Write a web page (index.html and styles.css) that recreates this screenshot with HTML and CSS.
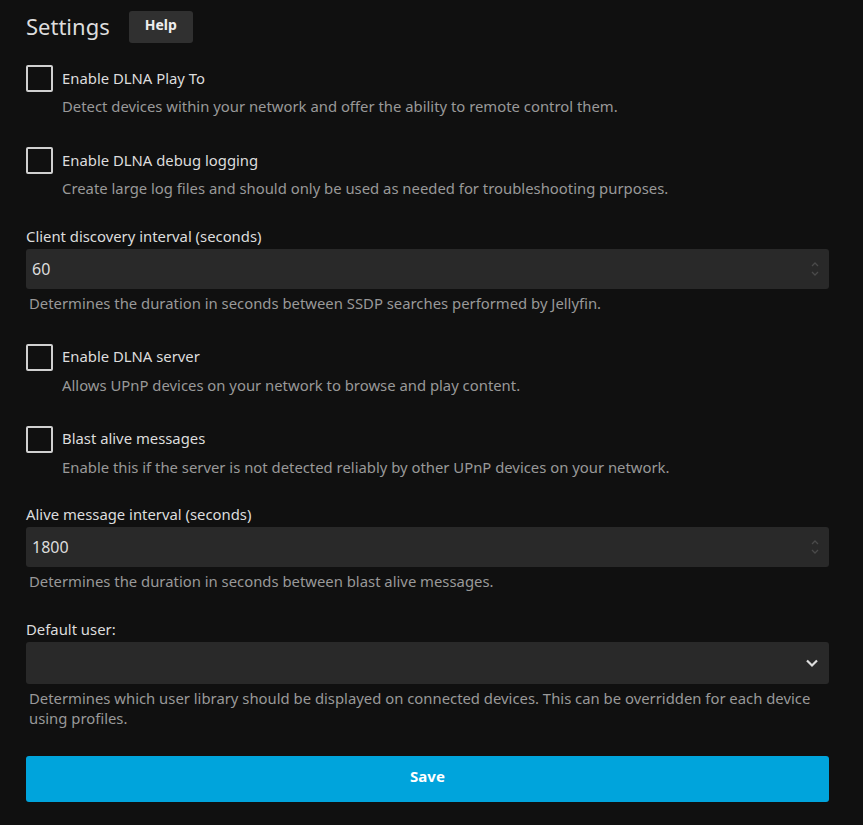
FILE: index.html
```html
<!DOCTYPE html>
<html>
<head>
<meta charset="utf-8">
<link rel="stylesheet" href="styles.css">
</head>
<body>
<div class="page">
  <div class="header">
    <h2 class="title">Settings</h2>
    <button class="help">Help</button>
  </div>

  <div class="check-block first">
    <label class="check-row"><span class="box"></span><span class="check-label">Enable DLNA Play To</span></label>
    <div class="check-desc">Detect devices within your network and offer the ability to remote control them.</div>
  </div>

  <div class="check-block">
    <label class="check-row"><span class="box"></span><span class="check-label">Enable DLNA debug logging</span></label>
    <div class="check-desc">Create large log files and should only be used as needed for troubleshooting purposes.</div>
  </div>

  <div class="field">
    <div class="field-label">Client discovery interval (seconds)</div>
    <div class="input">
      <span class="value">60</span>
      <svg class="spin" width="8" height="16" viewBox="0 0 8 16"><path d="M1 5 L4 2 L7 5 M1 11 L4 14 L7 11" fill="none" stroke="#4a4a4a" stroke-width="1.3"/></svg>
    </div>
    <div class="field-desc">Determines the duration in seconds between SSDP searches performed by Jellyfin.</div>
  </div>

  <div class="check-block">
    <label class="check-row"><span class="box"></span><span class="check-label">Enable DLNA server</span></label>
    <div class="check-desc">Allows UPnP devices on your network to browse and play content.</div>
  </div>

  <div class="check-block">
    <label class="check-row"><span class="box"></span><span class="check-label">Blast alive messages</span></label>
    <div class="check-desc">Enable this if the server is not detected reliably by other UPnP devices on your network.</div>
  </div>

  <div class="field">
    <div class="field-label">Alive message interval (seconds)</div>
    <div class="input">
      <span class="value">1800</span>
      <svg class="spin" width="8" height="16" viewBox="0 0 8 16"><path d="M1 5 L4 2 L7 5 M1 11 L4 14 L7 11" fill="none" stroke="#4a4a4a" stroke-width="1.3"/></svg>
    </div>
    <div class="field-desc">Determines the duration in seconds between blast alive messages.</div>
  </div>

  <div class="field">
    <div class="field-label">Default user:</div>
    <div class="input select">
      <span class="value"></span>
      <svg class="chev" width="14" height="10" viewBox="0 0 14 10"><path d="M2 2.5 L7 7.5 L12 2.5" fill="none" stroke="#dddddd" stroke-width="2.2"/></svg>
    </div>
    <div class="field-desc">Determines which user library should be displayed on connected devices. This can be overridden for each device using profiles.</div>
  </div>

  <button class="save">Save</button>
</div>
</body>
</html>
```

FILE: styles.css
```css
html, body {
  margin: 0;
  padding: 0;
  background: #101010;
}
body {
  font-family: "Noto Sans", sans-serif;
  color: #dddddd;
}
.page {
  padding: 11px 34px 0 26px;
  display: flex;
  flex-direction: column;
}
.header {
  display: flex;
  align-items: center;
  gap: 19px;
  height: 32px;
}
.title {
  margin: 0;
  font-size: 22px;
  font-weight: 400;
  line-height: 32px;
  margin-top: -2px;
  color: #dddddd;
}
.help {
  font-family: "Noto Sans", sans-serif;
  font-weight: 700;
  font-size: 14px;
  line-height: 20px;
  color: #eeeeee;
  background: #303030;
  border: none;
  border-radius: 3px;
  width: 64px;
  height: 32px;
  padding: 0 0 5px 0;
}
.check-block {
  margin-top: 31px;
  display: flex;
  flex-direction: column;
}
.check-block.first {
  margin-top: 22px;
}
.check-row {
  display: flex;
  align-items: center;
  gap: 9px;
  height: 27px;
}
.box {
  box-sizing: border-box;
  width: 27px;
  height: 27px;
  border: 2px solid #d0d0d0;
  border-radius: 2px;
}
.check-label {
  font-size: 14.85px;
  line-height: 20px;
  margin-top: -2px;
  color: #dddddd;
}
.check-desc {
  margin-top: 4px;
  padding-left: 36px;
  font-size: 14.85px;
  line-height: 20px;
  color: #999999;
}
.field {
  margin-top: 27.6px;
  display: flex;
  flex-direction: column;
}
.field-label {
  font-size: 14.85px;
  line-height: 20px;
  color: #dddddd;
}
.input {
  margin-top: 3px;
  height: 40px;
  background: #292929;
  border-radius: 3px;
  display: flex;
  align-items: center;
  justify-content: space-between;
  padding: 0 10px 0 6px;
}
.input.select {
  height: 42px;
  padding-right: 10px;
}
.value {
  font-size: 16px;
  color: #dddddd;
}
.field-desc {
  margin-top: 4px;
  padding-left: 3px;
  font-size: 14.85px;
  line-height: 20px;
  color: #999999;
}
.save {
  margin-top: 28px;
  height: 46px;
  border: none;
  border-radius: 3px;
  background: #00a4dc;
  color: #ffffff;
  font-family: "Noto Sans", sans-serif;
  font-weight: 700;
  font-size: 15px;
  padding: 0 0 5px 0;
}
```
